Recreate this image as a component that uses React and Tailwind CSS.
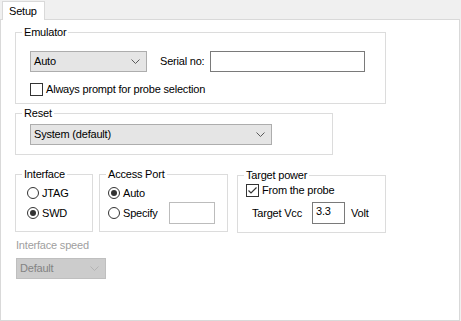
import React from "react";

const Chevron = ({ color = "#5a5a5a" }) => (
  <svg width="9" height="5" viewBox="0 0 9 5">
    <polyline points="0.5,0.5 4.5,4.5 8.5,0.5" fill="none" stroke={color} strokeWidth="1" />
  </svg>
);

const Combo = ({ value, width, disabled }) => (
  <div
    className={`flex h-[21px] items-center justify-between border pl-[3px] pr-[6px] ${
      disabled ? "border-[#bfbfbf] bg-[#cccccc] text-[#838383]" : "border-[#adadad] bg-[#e5e5e5]"
    }`}
    style={{ width }}
  >
    <span>{value}</span>
    <Chevron color={disabled ? "#b3b3b3" : "#5a5a5a"} />
  </div>
);

const Radio = ({ checked }) => (
  <span className="flex h-[12px] w-[12px] shrink-0 items-center justify-center rounded-full border border-[#333333] bg-white">
    {checked && <span className="h-[6px] w-[6px] rounded-full bg-[#333333]" />}
  </span>
);

const Checkbox = ({ checked }) => (
  <span className="flex h-[13px] w-[13px] shrink-0 items-center justify-center border border-[#333333] bg-white">
    {checked && (
      <svg width="11" height="11" viewBox="0 0 11 11">
        <polyline points="1.5,5.5 4,8 9.5,2.5" fill="none" stroke="#333333" strokeWidth="1.2" />
      </svg>
    )}
  </span>
);

const Group = ({ title, className, children }) => (
  <fieldset className={`border border-[#dcdcdc] ${className}`}>
    <legend className="ml-[6px] px-[2px] leading-[14px]">{title}</legend>
    {children}
  </fieldset>
);

export default function App() {
  return (
    <div className="h-[321px] w-[461px] bg-[#f0f0f0] font-['Liberation_Sans',Arial,sans-serif] text-[11px] tracking-[-0.2px] text-black">
      {/* tab strip */}
      <div className="pt-[1px]">
        <div className="relative z-10 ml-[2px] flex h-[19px] w-[43px] items-center border-x border-t border-[#d9d9d9] bg-white pl-[6px]">
          Setup
        </div>
      </div>

      {/* tab page */}
      <div className="-mt-px flex h-[302px] w-[460px] flex-col border border-[#d9d9d9] bg-white">
        <Group title="Emulator" className="ml-[14px] mt-[5px] h-[79px] w-[371px]">
          <div className="pl-[14px] pt-[12px]">
            <div className="flex h-[21px] items-center">
              <Combo value="Auto" width={117} />
              <span className="ml-[13px] w-[50px]">Serial no:</span>
              <div className="h-[21px] w-[155px] border border-[#7a7a7a] bg-white" />
            </div>
            <div className="mt-[11px] flex h-[13px] items-center gap-[3px]">
              <Checkbox />
              <span>Always prompt for probe selection</span>
            </div>
          </div>
        </Group>

        <Group title="Reset" className="ml-[14px] mt-[2px] h-[49px] w-[318px]">
          <div className="pl-[14px] pt-[4px]">
            <Combo value="System (default)" width={242} />
          </div>
        </Group>

        <div className="ml-[14px] mt-[12px] flex items-start">
          <Group title="Interface" className="h-[65px] w-[78px]">
            <div className="pl-[11px] pt-[5px]">
              <div className="flex h-[14px] items-center gap-[3px]">
                <Radio />
                <span>JTAG</span>
              </div>
              <div className="mt-[6px] flex h-[14px] items-center gap-[3px]">
                <Radio checked />
                <span>SWD</span>
              </div>
            </div>
          </Group>

          <Group title="Access Port" className="ml-[6px] h-[65px] w-[129px]">
            <div className="pl-[8px] pt-[5px]">
              <div className="flex h-[14px] items-center gap-[3px]">
                <Radio checked />
                <span>Auto</span>
              </div>
              <div className="mt-[2px] flex h-[22px] items-center">
                <div className="flex w-[61px] items-center gap-[3px]">
                  <Radio />
                  <span>Specify</span>
                </div>
                <div className="h-[22px] w-[46px] border border-[#bcbcbc] bg-white" />
              </div>
            </div>
          </Group>

          <Group title="Target power" className="ml-[9px] mt-[1px] h-[65px] w-[149px]">
            <div className="pl-[8px] pt-[1px]">
              <div className="flex h-[14px] items-center gap-[3px]">
                <Checkbox checked />
                <span>From the probe</span>
              </div>
              <div className="mt-[5px] flex h-[22px] items-center pl-[6px]">
                <span className="w-[60px]">Target Vcc</span>
                <div className="h-[22px] w-[33px] border border-[#7a7a7a] bg-white pl-[3px] pt-[1px] leading-[14px]">
                  3.3
                </div>
                <span className="ml-[6px]">Volt</span>
              </div>
            </div>
          </Group>
        </div>

        <div className="ml-[15px] mt-[5px] leading-[14px] text-[#a0a0a0]">Interface speed</div>
        <div className="ml-[15px] mt-[6px]">
          <Combo value="Default" width={90} disabled />
        </div>
      </div>
    </div>
  );
}
